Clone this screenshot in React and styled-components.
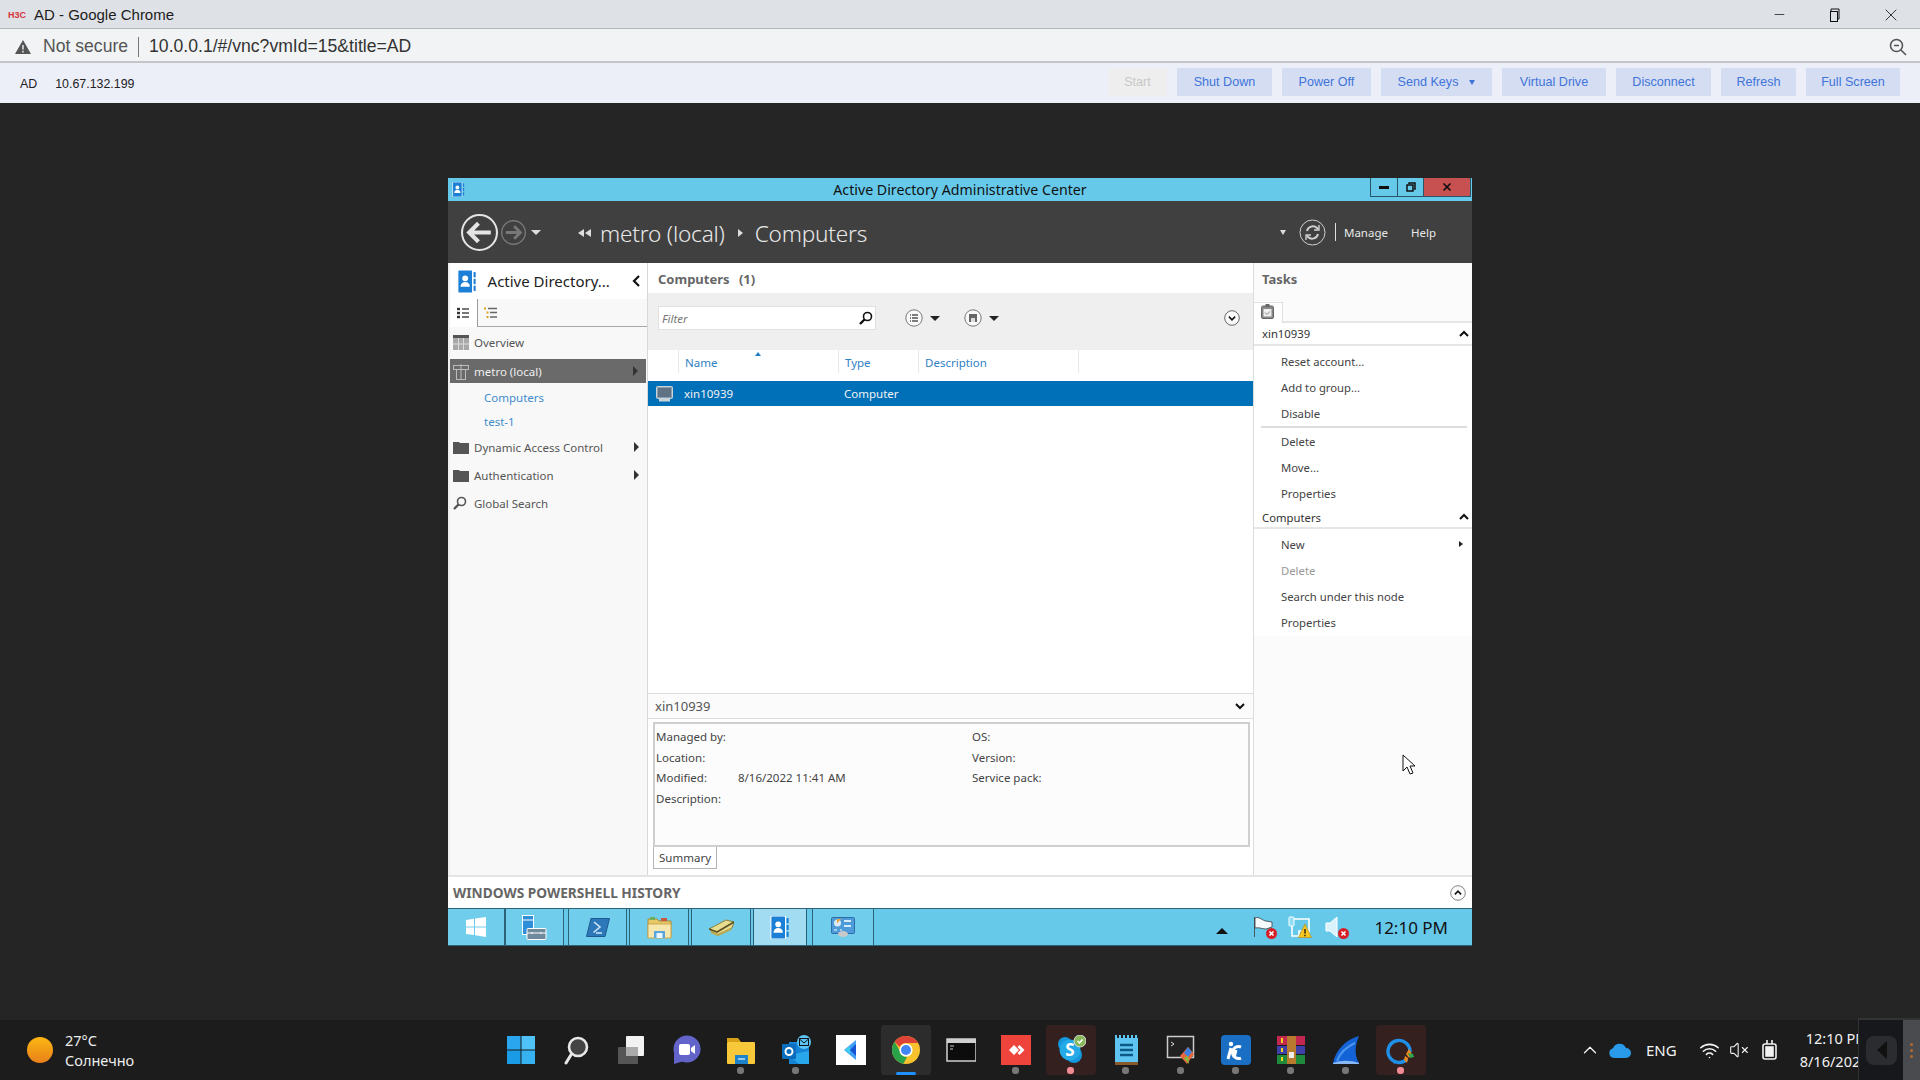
import React from "react";
import styled, { createGlobalStyle } from "styled-components";
import { Wifi, VolumeX, ChevronUp, Minus, X } from "lucide-react";

const GlobalStyle = createGlobalStyle`
  html, body { margin: 0; padding: 0; background: #252525; }
  * { box-sizing: border-box; }
  #root { width: 1920px; height: 1080px; overflow: hidden; }
`;

const SEGOE = `"Noto Sans", "Open Sans", sans-serif`;

const Page = styled.div`
  position: relative;
  width: 1920px;
  height: 1080px;
  display: flex;
  flex-direction: column;
  font-family: "Liberation Sans", sans-serif;
  overflow: hidden;
`;

/* browser chrome */
const ChromeTitle = styled.div`
  height: 29px;
  background: #dee1e6;
  border-bottom: 1px solid #b4b6ba;
  display: flex;
  align-items: center;
  padding: 1px 0 0 8px;
  color: #1c1c1c;
  font-size: 15px;
`;
const Favicon = styled.span`
  width: 21px;
  margin-right: 5px;
  color: #d8343c;
  font-size: 9px;
  font-weight: 700;
`;
const WinControls = styled.div`
  margin-left: auto;
  display: flex;
  align-items: center;
  padding-right: 1px;
  color: #111;
`;
const WinControl = styled.span`
  width: 56px;
  display: flex;
  justify-content: center;
`;
const AddressBar = styled.div`
  height: 34px;
  background: #f1f3f4;
  border-bottom: 2px solid #c4c5c7;
  display: flex;
  align-items: center;
  padding: 3px 13px 0 15px;
  font-size: 17.6px;
  color: #555;
`;
const Divider = styled.span`
  width: 1px;
  height: 20px;
  background: #777;
  margin: 0 10px 0 10px;
`;
const Url = styled.span`
  color: #333;
`;
const VncBar = styled.div`
  height: 40px;
  background: #eceef8;
  display: flex;
  align-items: center;
  padding: 0 20px;
  font-size: 12.4px;
  color: #222;
`;
const VncInfo = styled.div`
  padding-top: 2px;
`;
const VncName = styled.span`
  margin-right: 18px;
`;
const VncButtons = styled.div`
  margin-left: auto;
  padding-bottom: 2px;
  display: flex;
  gap: 10px;
`;
const VncButton = styled.div`
  width: ${(p) => p.$w}px;
  height: 28px;
  background: ${(p) => (p.$off ? "#eeeeee" : "#d5ddf3")};
  color: ${(p) => (p.$off ? "#c8c8c8" : "#3f74d8")};
  display: flex;
  align-items: center;
  justify-content: center;
  gap: 11px;
  font-size: 12.6px;
`;
const DownCaret = styled.i`
  width: 0;
  height: 0;
  border-left: 3.5px solid transparent;
  border-right: 3.5px solid transparent;
  border-top: 5px solid ${(p) => p.$color || "#3f74d8"};
`;

/* remote desktop */
const Stage = styled.div`
  flex: 1;
  background: #252525;
  display: flex;
  justify-content: center;
  padding-top: 75px;
`;
const Win = styled.div`
  width: 1024px;
  height: 768px;
  display: flex;
  flex-direction: column;
  font-family: ${SEGOE};
  font-size: 11.5px;
  background: #fff;
  color: #444;
`;
const TitleBar = styled.div`
  height: 23px;
  flex: none;
  background: #66c9ea;
  display: grid;
  grid-template-columns: 1fr auto 1fr;
  align-items: center;
  font-size: 14.2px;
  color: #111;
`;
const TitleIcon = styled.div`
  padding-left: 4px;
  display: flex;
`;
const TitleButtons = styled.div`
  justify-self: end;
  align-self: start;
  display: flex;
  margin-right: 1px;
  height: 19px;
  border: 1px solid #25566a;
  border-top: 0;
`;
const TitleButton = styled.span`
  width: ${(p) => p.$w}px;
  background: ${(p) => (p.$close ? "#c75050" : "transparent")};
  border-right: ${(p) => (p.$close ? "0" : "1px solid #25566a")};
  display: flex;
  align-items: center;
  justify-content: center;
`;
const DarkBar = styled.div`
  height: 62px;
  flex: none;
  background: #404040;
  color: #e8e8e8;
  display: flex;
  align-items: center;
  padding-left: 13px;
`;
const BarIcon = styled.span`
  margin-left: ${(p) => p.$gap}px;
  display: flex;
`;
const Crumbs = styled.div`
  display: flex;
  align-items: center;
  font-size: 22.6px;
  font-weight: 300;
  padding-top: 2px;
  margin-left: 37px;
  letter-spacing: -0.2px;
`;
const DarkRight = styled.div`
  margin-left: auto;
  display: flex;
  align-items: center;
  font-size: 11.5px;
  padding-right: 36px;
`;
const DarkSep = styled.span`
  width: 1px;
  height: 18px;
  background: #ddd;
  margin: 0 8px 0 9px;
`;
const Main = styled.div`
  flex: 1;
  min-height: 0;
  display: flex;
`;

/* left nav */
const Nav = styled.div`
  width: 200px;
  flex: none;
  background: #f8f8f8;
  border-left: 2px solid #f0f0f0;
  border-right: 1px solid #d8d8d8;
  display: flex;
  flex-direction: column;
`;
const NavHead = styled.div`
  height: 36px;
  display: flex;
  align-items: center;
  padding-left: 7px;
  font-size: 15px;
  color: #222;
  background: #fff;
`;
const NavHeadText = styled.span`
  margin-left: 11px;
  flex: 1;
`;
const NavTabs = styled.div`
  height: 28px;
  display: flex;
`;
const NavTab = styled.div`
  flex: ${(p) => (p.$on ? "0 0 28px" : 1)};
  background: ${(p) => (p.$on ? "#fff" : "transparent")};
  border-right: ${(p) => (p.$on ? "1px solid #9a9a9a" : "0")};
  border-bottom: ${(p) => (p.$on ? "0" : "1px solid #a8a8a8")};
  display: flex;
  align-items: center;
  padding-left: ${(p) => (p.$on ? 7 : 6)}px;
`;
const NavList = styled.div`
  padding-top: 1px;
  display: flex;
  flex-direction: column;
`;
const NavRow = styled.div`
  height: ${(p) => (p.$sel ? 24 : 28)}px;
  margin: ${(p) => (p.$sel ? "3px 1px 2px 0" : "0")};
  background: ${(p) => (p.$sel ? "#6a6a6a" : "transparent")};
  color: ${(p) => (p.$sel ? "#eee" : "#555")};
  display: flex;
  align-items: center;
  padding: 0 8px 0 3px;
`;
const NavIconBox = styled.span`
  width: 21px;
  flex: none;
  display: flex;
`;
const NavLabel = styled.span`
  flex: 1;
`;
const NavSub = styled.div`
  height: 24px;
  padding: 0 0 0 34px;
  display: flex;
  align-items: center;
  color: #3f8ccb;
`;
const RightCaret = styled.i`
  width: 0;
  height: 0;
  border-top: 5px solid transparent;
  border-bottom: 5px solid transparent;
  border-left: 5px solid ${(p) => p.$color || "#333"};
`;
const SmallCaret = styled(RightCaret)`
  border-top-width: 3.5px;
  border-bottom-width: 3.5px;
  border-left-width: 4px;
`;

/* centre */
const Center = styled.div`
  flex: 1;
  min-width: 0;
  display: flex;
  flex-direction: column;
  background: #fff;
`;
const PaneTitle = styled.div`
  height: 30px;
  flex: none;
  display: flex;
  align-items: center;
  padding: 1px 0 0 ${(p) => p.$pad}px;
  font-weight: 700;
  font-size: 13px;
  color: #666;
  word-spacing: 6px;
`;
const FilterBar = styled.div`
  height: 57px;
  flex: none;
  background: #efefef;
  display: flex;
  align-items: flex-start;
  padding: 13px 13px 0 10px;
`;
const FilterBox = styled.div`
  width: 218px;
  height: 24px;
  background: #fff;
  border: 1px solid #e0e0e0;
  display: flex;
  align-items: center;
  justify-content: space-between;
  padding: 0 2px 0 3px;
  font-style: italic;
  color: #777;
`;
const ViewButton = styled.div`
  display: flex;
  align-items: center;
  gap: 7px;
  margin-left: ${(p) => p.$gap}px;
  height: 24px;
`;
const FilterEnd = styled.div`
  margin-left: auto;
  height: 24px;
  display: flex;
  align-items: center;
`;
const ColHead = styled.div`
  height: 31px;
  flex: none;
  position: relative;
  display: grid;
  grid-template-columns: 30px 160px 80px 160px 1fr;
  color: #2f81c4;
`;
const ColCell = styled.div`
  display: flex;
  align-items: center;
  padding: 2px 0 0 6px;
  border-left: ${(p) => (p.$first ? "0" : "1px solid #e8e8e8")};
  margin-bottom: 8px;
`;
const SortMark = styled.i`
  position: absolute;
  left: 107px;
  top: 2px;
  width: 0;
  height: 0;
  border-left: 3.5px solid transparent;
  border-right: 3.5px solid transparent;
  border-bottom: 4px solid #1f7fc4;
`;
const SelRow = styled.div`
  height: 25px;
  flex: none;
  background: #0070b8;
  color: #f2f2f2;
  display: grid;
  grid-template-columns: 30px 160px 1fr;
  align-items: center;
`;
const SelIcon = styled.div`
  padding-left: 8px;
  display: flex;
`;
const SelCell = styled.div`
  padding-left: 6px;
`;
const ListFill = styled.div`
  flex: 1;
`;
const PreviewHead = styled.div`
  height: 26px;
  flex: none;
  background: #fbfbfb;
  border-top: 1px solid #dcdcdc;
  border-bottom: 1px solid #dcdcdc;
  display: flex;
  align-items: center;
  justify-content: space-between;
  padding: 0 8px 0 7px;
  font-size: 13px;
  color: #555;
`;
const PreviewBox = styled.div`
  height: 125px;
  flex: none;
  margin: 3px 3px 0 5px;
  background: #fcfcfc;
  border: 2px solid #cfcfcf;
  padding: 2px 2px 0 1px;
  display: grid;
  grid-template-columns: 316px 1fr;
  grid-auto-rows: 20.8px;
  align-items: center;
  color: #444;
`;
const Field = styled.div`
  display: flex;
`;
const FieldLabel = styled.span`
  width: 82px;
  flex: none;
`;
const PreviewTabs = styled.div`
  height: 28px;
  flex: none;
  padding-left: 5px;
`;
const SummaryTab = styled.div`
  width: 64px;
  height: 22px;
  background: #fff;
  border: 1px solid #b4b4b4;
  border-top: 0;
  display: flex;
  align-items: center;
  justify-content: center;
  color: #444;
`;

/* tasks */
const Tasks = styled.div`
  width: 219px;
  flex: none;
  background: #fbfbfb;
  border-left: 1px solid #dcdcdc;
  display: flex;
  flex-direction: column;
  color: #444;
  font-size: 11.3px;
`;
const TaskTabs = styled.div`
  height: 30px;
  flex: none;
  padding-top: 9px;
  border-bottom: 2px solid #e6e6e6;
  display: flex;
`;
const TaskTab = styled.div`
  width: 29px;
  height: 21px;
  background: #fff;
  border: 1px solid #e0e0e0;
  border-left: 0;
  border-bottom: 0;
  padding-left: 7px;
`;
const SectionHead = styled.div`
  height: ${(p) => p.$h || 23}px;
  flex: none;
  background: #fff;
  border-bottom: 2px solid #e6e6e6;
  display: flex;
  align-items: center;
  justify-content: space-between;
  padding: 0 3px 0 8px;
  color: #333;
`;
const TaskList = styled.div`
  background: #fff;
  padding-top: 2px;
  padding-bottom: 1px;
  display: flex;
  flex-direction: column;
`;
const TaskItem = styled.div`
  height: 26px;
  flex: none;
  display: flex;
  align-items: center;
  justify-content: space-between;
  padding: 0 9px 0 27px;
  color: ${(p) => (p.$off ? "#999" : "#444")};
`;
const TaskSep = styled.div`
  height: 2px;
  margin: 0 5px 0 7px;
  background: #ddd;
`;

/* powershell strip + server taskbar */
const PsStrip = styled.div`
  height: 33px;
  flex: none;
  background: #fff;
  border-top: 2px solid #e4e4e4;
  display: flex;
  align-items: center;
  justify-content: space-between;
  padding: 0 6px 0 5px;
  font-weight: 700;
  font-size: 13.7px;
  color: #666;
`;
const ServerBar = styled.div`
  height: 38px;
  flex: none;
  background: #66c9ea;
  border-top: 1px solid #2e6277;
  border-bottom: 1px solid #2e6277;
  display: flex;
  align-items: stretch;
`;
const ServerBtn = styled.div`
  width: ${(p) => p.$w || 59}px;
  margin-right: ${(p) => p.$mr ?? 2}px;
  background: ${(p) => (p.$on ? "#a2dcf2" : "#70cdeb")};
  border-right: 1px solid #2e6277;
  border-left: ${(p) => (p.$first ? "0" : "1px solid #2e6277")};
  display: flex;
  align-items: center;
  justify-content: center;
`;
const ServerTray = styled.div`
  margin-left: auto;
  display: flex;
  align-items: center;
  padding-right: 24px;
`;
const TrayCaret = styled.i`
  width: 0;
  height: 0;
  border-left: 6px solid transparent;
  border-right: 6px solid transparent;
  border-bottom: 6px solid #111;
  margin: 8px 25px 0 0;
`;
const TrayIcon = styled.span`
  position: relative;
  display: flex;
  margin-right: ${(p) => p.$mr}px;
`;
const ServerClock = styled.span`
  font-size: 17px;
  color: #111;
`;

/* local taskbar */
const Taskbar = styled.div`
  height: 60px;
  flex: none;
  background: #1c1c1c;
  display: flex;
  align-items: center;
  color: #eee;
  font-family: ${SEGOE};
`;
const Weather = styled.div`
  width: 493px;
  flex: none;
  display: flex;
  align-items: center;
  padding-left: 27px;
  gap: 12px;
  font-size: 14.5px;
  line-height: 20px;
`;
const Sun = styled.span`
  width: 26px;
  height: 26px;
  border-radius: 50%;
  background: linear-gradient(180deg, #fdb813 0%, #e8801a 100%);
`;
const AppSlots = styled.div`
  display: flex;
`;
const AppSlot = styled.div`
  position: relative;
  width: 55px;
  height: 50px;
  padding: 0 2.5px;
  display: flex;
  align-items: center;
  justify-content: center;
  border-radius: 5px;
  background: ${(p) => p.$bg || "transparent"};
  background-clip: content-box;
`;
const AppDot = styled.i`
  position: absolute;
  left: 50%;
  bottom: ${(p) => (p.$wide ? 0 : 1)}px;
  width: ${(p) => (p.$wide ? 20 : 7)}px;
  height: ${(p) => (p.$wide ? 3 : 7)}px;
  margin-left: ${(p) => (p.$wide ? -10 : -3.5)}px;
  border-radius: 3px;
  background: ${(p) => p.$color};
`;
const Tray = styled.div`
  display: flex;
  align-items: center;
  margin-left: 151px;
  color: #f2f2f2;
`;
const TrayItem = styled.span`
  display: flex;
  margin-right: ${(p) => p.$mr}px;
  font-size: ${(p) => p.$fs || 14}px;
`;
const Clock = styled.div`
  display: flex;
  flex-direction: column;
  align-items: flex-end;
  white-space: nowrap;
  font-size: 14.5px;
  line-height: 23px;
`;
const Overlay = styled.div`
  position: absolute;
  right: 0;
  bottom: 0;
  width: 62px;
  height: 62px;
  background: #17181c;
  border-top: 2px solid #333;
  border-left: 1px solid #333;
  display: flex;
  align-items: center;
`;
const OverlayLogo = styled.div`
  width: 31px;
  height: 29px;
  margin-left: 7px;
  border-radius: 8px;
  background: #2b2c30;
  display: flex;
  align-items: center;
  justify-content: center;
`;
const OverlayStrip = styled.div`
  margin-left: auto;
  width: 17px;
  height: 100%;
  background: #4a4b4f;
  display: flex;
  flex-direction: column;
  align-items: center;
  justify-content: center;
  gap: 3px;
`;
const OverlayDot = styled.i`
  width: 3px;
  height: 3px;
  border-radius: 50%;
  background: #b36a2c;
`;
const Pointer = styled.svg`
  position: absolute;
  left: 1402px;
  top: 754px;
`;

/* drawings */
const AdIcon = ({ size = 12 }) => (
  <svg width={size * 0.85} height={size} viewBox="0 0 17 22">
    <rect x="0" y="0" width="14" height="22" rx="1" fill="#1c7fd6" stroke="#fff" />
    <rect x="15" y="2" width="2" height="5" fill="#1c7fd6" />
    <rect x="15" y="8.5" width="2" height="5" fill="#1c7fd6" />
    <rect x="15" y="15" width="2" height="5" fill="#1c7fd6" />
    <circle cx="7" cy="8" r="2.8" fill="#fff" />
    <path d="M2.5 16c0-3 2-4.5 4.5-4.5s4.5 1.5 4.5 4.5z" fill="#fff" />
  </svg>
);
const RoundArrow = ({ size, color, dir = 1, width = 2 }) => (
  <svg width={size} height={size} viewBox="0 0 36 36" style={{ transform: dir < 0 ? "scaleX(-1)" : "none" }}>
    <circle cx="18" cy="18" r="17" fill="none" stroke={color} strokeWidth={width} />
    <path d="M7 18h20M19 9l9 9-9 9" fill="none" stroke={color} strokeWidth="4" />
  </svg>
);
const Caret = ({ color = "#222", w = 9 }) => <DownCaret $color={color} style={{ borderLeftWidth: w / 2, borderRightWidth: w / 2 }} />;
const Circled = ({ children, size = 18, color = "#777" }) => (
  <svg width={size} height={size} viewBox="0 0 18 18">
    <circle cx="9" cy="9" r="8.2" fill="#fafafa" stroke={color} />
    {children}
  </svg>
);
const Chevron = ({ up, color = "#111", size = 10 }) => (
  <svg width={size} height={size} viewBox="0 0 10 10">
    <path d={up ? "M1 7l4-4 4 4" : "M1 3l4 4 4-4"} fill="none" stroke={color} strokeWidth="2" />
  </svg>
);
const Folder = () => (
  <svg width="16" height="13" viewBox="0 0 16 13">
    <path d="M0 1h6l1 1h9v11H0z" fill="#555" />
  </svg>
);
const GridIcon = () => (
  <svg width="16" height="15" viewBox="0 0 16 15">
    <rect width="16" height="15" fill="#a9a9a9" />
    <rect width="16" height="3" fill="#555" />
    <path d="M5.5 3v12M10.5 3v12M0 9h16" stroke="#ddd" />
  </svg>
);
const DomainIcon = () => (
  <svg width="16" height="17" viewBox="0 0 16 17" fill="none" stroke="#bbb">
    <rect x="0.5" y="2.5" width="15" height="4" />
    <rect x="3.5" y="6.5" width="9" height="10" />
    <path d="M8 1v15" />
  </svg>
);
const MagSmall = ({ color = "#555", size = 14 }) => (
  <svg width={size} height={size} viewBox="0 0 14 14" fill="none" stroke={color}>
    <circle cx="8.5" cy="5.5" r="4" strokeWidth="1.6" />
    <path d="M5.5 8.5L1 13" strokeWidth="2.4" />
  </svg>
);
const ListLines = () => (
  <svg width="12" height="12" viewBox="0 0 12 12" stroke="#555" strokeWidth="1.6">
    {[2, 6, 10].map((y) => (
      <g key={y}>
        <path d={`M0 ${y}h3`} stroke="#333" strokeWidth="2.4" />
        <path d={`M5 ${y}h7`} />
      </g>
    ))}
  </svg>
);
const TreeLines = () => (
  <svg width="13" height="12" viewBox="0 0 13 12" strokeWidth="1.5">
    <path d="M0 1.5h2M2.5 5.5h2M2.5 10h2" stroke="#d9a21b" strokeWidth="2" />
    <path d="M4 1.5h9M6 5.5h7M6 10h7" stroke="#666" />
  </svg>
);
const Clipboard = () => (
  <svg width="13" height="15" viewBox="0 0 13 15" style={{ marginTop: 1 }}>
    <rect x="0.5" y="2" width="12" height="12.5" rx="1.5" fill="#888" stroke="#666" />
    <rect x="2.5" y="5" width="8" height="7.5" fill="#eee" />
    <rect x="4.5" y="0" width="4" height="3" fill="#666" />
    <path d="M4 8.5l2 2 3-3" stroke="#888" fill="none" />
  </svg>
);
const Monitor = () => (
  <svg width="17" height="16" viewBox="0 0 17 16">
    <rect x="0.5" y="0.5" width="16" height="12" rx="1" fill="#8aa0b2" stroke="#c9d3da" />
    <rect x="2" y="2" width="13" height="9" fill="#5f7384" />
    <rect x="3" y="13" width="11" height="2.5" fill="#c9d3da" />
  </svg>
);

const ServerGlyphs = {
  win: (
    <svg width="20" height="20" viewBox="0 0 20 20" fill="#fff">
      <path d="M0 3l8-1.2V9.5H0zM9 1.6L20 0v9.5H9zM0 10.5h8V18L0 17zM9 10.5h11V20L9 18.3z" />
    </svg>
  ),
  server: (
    <svg width="25" height="25" viewBox="0 0 25 25">
      <rect x="0.5" y="0.5" width="11" height="19" fill="#2e8fd8" stroke="#fff" />
      <path d="M1 5h10" stroke="#fff" />
      <rect x="5" y="13.5" width="19" height="11" rx="1" fill="#6f8a9c" stroke="#fff" />
      <path d="M5 18h19M10 17v2M19 17v2" stroke="#fff" />
    </svg>
  ),
  ps: (
    <svg width="24" height="19" viewBox="0 0 24 19">
      <path d="M5 0.5h18.5L19 18.5H0.5z" fill="#2c78b8" stroke="#1c5a90" />
      <path d="M8 4l6 5-6.5 5.5M10 15h6" fill="none" stroke="#cfe6f7" strokeWidth="1.6" />
    </svg>
  ),
  files: (
    <svg width="25" height="23" viewBox="0 0 25 23">
      <path d="M1 3h9l2 2h12v16H1z" fill="#e8c766" stroke="#a88b3a" />
      <path d="M1 8h23v14H1z" fill="#f6e7ae" stroke="#c9a951" />
      <rect x="3" y="1" width="5" height="3" fill="#6fae5a" />
      <rect x="14" y="2" width="6" height="3" fill="#c8593f" />
      <path d="M7 22v-7h11v7" fill="#5aa5dd" />
      <rect x="9.5" y="17" width="6" height="5" fill="#eaf6fd" />
    </svg>
  ),
  book: (
    <svg width="25" height="17" viewBox="0 0 25 17">
      <path d="M0 10L17 1l8 2-2 6L8 16z" fill="#e7dc8f" stroke="#8a7f3c" />
      <path d="M0 10l8 3L25 3" fill="none" stroke="#5d5220" strokeWidth="1.6" />
      <path d="M2 13l7 3 13-6" fill="none" stroke="#bba94d" strokeWidth="2" />
    </svg>
  ),
  panel: (
    <svg width="24" height="20" viewBox="0 0 24 20">
      <rect x="0.5" y="0.5" width="23" height="16" rx="1" fill="#4f9ad8" stroke="#2a6fa8" />
      <circle cx="6.5" cy="6" r="3.5" fill="#d9ecf8" />
      <path d="M6.5 6V2.500h3" fill="#f0a53a" stroke="#f0a53a" />
      <path d="M13 4h7M13 9h7" stroke="#d5ecfb" strokeWidth="2" />
      <path d="M3 13h3M9 13h2" stroke="#9ed0f2" strokeWidth="2" />
      <ellipse cx="12" cy="17" rx="5" ry="3" fill="#c9c9c9" />
    </svg>
  ),
};

const Cross = () => (
  <svg width="11" height="11" viewBox="0 0 11 11" style={{ position: "absolute", right: -2, bottom: -1 }}>
    <circle cx="5.5" cy="5.5" r="5.5" fill="#d81f26" />
    <path d="M3.5 3.5l4 4M7.5 3.5l-4 4" stroke="#fff" strokeWidth="1.6" />
  </svg>
);
const Flag = () => (
  <TrayIcon $mr={13}>
    <svg width="22" height="22" viewBox="0 0 22 22">
      <path d="M1.5 1v20M2 2c4-2 8 3 11 3l6 1v5l-6 2c-4 0-7-2-11-1z" fill="#f5fbfd" stroke="#3a3a3a" strokeWidth=".8" />
    </svg>
    <Cross />
  </TrayIcon>
);
const NetTray = () => (
  <TrayIcon $mr={13}>
    <svg width="24" height="22" viewBox="0 0 24 22">
      <rect x="1" y="1" width="5" height="9" rx="1" fill="#8fdcf5" stroke="#fff" />
      <path d="M6 3h15v14M4 10v10h7v-5h4" fill="none" stroke="#fff" strokeWidth="1.6" />
      <path d="M17 8l6.5 13.5H10.5z" fill="#f7c51e" stroke="#b68a0c" strokeWidth=".6" />
      <path d="M17 13v4.5M17 18.8v1.4" stroke="#111" strokeWidth="1.3" />
    </svg>
  </TrayIcon>
);
const SoundTray = () => (
  <TrayIcon $mr={27}>
    <svg width="22" height="22" viewBox="0 0 22 22">
      <path d="M1 7h4l7-6v20l-7-6H1z" fill="#d9f2fb" stroke="#fff" />
    </svg>
    <Cross />
  </TrayIcon>
);

const App24 = ({ children, w = 30, h = 30 }) => (
  <svg width={w} height={h} viewBox="0 0 30 30">
    {children}
  </svg>
);

const apps = [
  {
    key: "start",
    icon: (
      <App24>
        <path d="M1 1h13.5v13.5H1z" fill="#29a6ee" />
        <path d="M15.5 1H29v13.5H15.5z" fill="#4fc3f7" />
        <path d="M1 15.5h13.5V29H1z" fill="#1a9be6" />
        <path d="M15.5 15.5H29V29H15.5z" fill="#36b2f0" />
      </App24>
    ),
  },
  {
    key: "search",
    icon: (
      <App24>
        <circle cx="17" cy="12" r="9" fill="#444" stroke="#e8e8e8" strokeWidth="2.6" />
        <path d="M10.5 19L5 28" stroke="#e8e8e8" strokeWidth="3" strokeLinecap="round" />
      </App24>
    ),
  },
  {
    key: "task",
    icon: (
      <App24>
        <rect x="2" y="12" width="20" height="17" rx="1" fill="#555" />
        <rect x="10" y="1" width="18" height="20" rx="1" fill="#f2f2f2" />
        <rect x="10" y="12" width="12" height="9" fill="#aaa" />
      </App24>
    ),
  },
  {
    key: "chat",
    icon: (
      <App24>
        <circle cx="16" cy="14" r="13.5" fill="#6264c9" />
        <path d="M3 18v11l10-3z" fill="#6264c9" />
        <rect x="8" y="9" width="11" height="11" rx="2" fill="#fff" />
        <path d="M20 13l4-3v9l-4-3z" fill="#fff" />
      </App24>
    ),
  },
  {
    key: "explorer",
    dot: "#777",
    icon: (
      <App24>
        <path d="M1 3h11l3 4H1z" fill="#d9a117" />
        <rect x="1" y="7" width="28" height="22" rx="1" fill="#f6c83a" />
        <rect x="9" y="20" width="13" height="9" fill="#1d82c9" />
        <path d="M12 24h7" stroke="#bfe3f8" strokeWidth="1.5" />
      </App24>
    ),
  },
  {
    key: "outlook",
    dot: "#777",
    icon: (
      <App24>
        <rect x="8" y="7" width="20" height="22" fill="#1584d6" />
        <path d="M8 20l10 9h10V16z" fill="#28a8ea" />
        <rect x="1" y="9" width="14" height="15" rx="1" fill="#0a6cbd" />
        <circle cx="8" cy="16.5" r="3.5" fill="none" stroke="#fff" strokeWidth="2" />
        <ellipse cx="23" cy="7" rx="7" ry="7" fill="#5cc5f5" />
        <rect x="18.5" y="3.5" width="9" height="7" fill="none" stroke="#111" />
        <path d="M18.5 4l4.5 4 4.5-4" fill="none" stroke="#111" />
      </App24>
    ),
  },
  {
    key: "kite",
    icon: (
      <App24>
        <rect width="30" height="30" fill="#fff" />
        <path d="M20 5L8 15l12 10z" fill="#3f9ff5" />
        <path d="M14 15l6-6v12z" fill="#1554d4" />
        <path d="M9 15l5-4v8z" fill="#3fd0f0" />
      </App24>
    ),
  },
  {
    key: "chrome",
    dot: "#1e90ff",
    wide: true,
    bg: "#2c2c2c",
    icon: (
      <App24>
        <circle cx="15" cy="15" r="14" fill="#f7c22d" />
        <path d="M15 1a14 14 0 0 1 12.1 7H15a7 7 0 0 0-6.3 4L3.6 6.8A14 14 0 0 1 15 1z" fill="#dd4437" />
        <path d="M3.6 6.8l6 10.4a7 7 0 0 0 6.4 4.8l-3.6 6.8A14 14 0 0 1 3.6 6.8z" fill="#2aa24a" />
        <circle cx="15" cy="15" r="6.6" fill="#fff" />
        <circle cx="15" cy="15" r="5" fill="#4285f4" />
      </App24>
    ),
  },
  {
    key: "cmd",
    icon: (
      <App24>
        <rect x="1" y="4" width="29" height="22" fill="#0c0c0c" stroke="#cfcfcf" strokeWidth="1.5" />
        <path d="M1 4h29v4H1z" fill="#cfcfcf" />
        <path d="M4 11h4M4 14h3" stroke="#ccc" />
      </App24>
    ),
  },
  {
    key: "anydesk",
    dot: "#777",
    icon: (
      <App24>
        <rect width="30" height="30" fill="#ef443b" />
        <path d="M13 10l5 5-5 5-5-5zM18.500 10l5 5-5 5-2-2 3-3-3-3z" fill="#fff" />
      </App24>
    ),
  },
  {
    key: "skype",
    dot: "#f08b96",
    bg: "#33201f",
    icon: (
      <App24>
        <circle cx="9" cy="9" r="7" fill="#1497dc" />
        <circle cx="18" cy="20" r="8" fill="#1497dc" />
        <circle cx="14" cy="15" r="10.5" fill="#25aae8" />
        <text x="14" y="21" textAnchor="middle" fontSize="17" fontWeight="700" fill="#fff" fontFamily="Noto Sans">
          S
        </text>
        <circle cx="24" cy="6" r="6" fill="#87b95a" stroke="#ddd" />
        <path d="M21.5 6l2 2 3-3.5" fill="none" stroke="#fff" strokeWidth="1.5" />
      </App24>
    ),
  },
  {
    key: "notes",
    dot: "#777",
    icon: (
      <App24>
        <rect x="4" y="3" width="23" height="25" fill="#5ec4f2" />
        <rect x="4" y="27" width="23" height="3" fill="#8a5a2c" />
        <path d="M5 3V0M9 3V0M13 3V0M17 3V0M21 3V0M25 3V0" stroke="#5ec4f2" strokeWidth="2" />
        <path d="M9 10h13M9 15h13M9 20h13" stroke="#0e5a86" strokeWidth="2.4" />
      </App24>
    ),
  },
  {
    key: "code",
    dot: "#777",
    icon: (
      <App24>
        <rect x="1.5" y="1.5" width="26" height="21" fill="#222" stroke="#ccc" strokeWidth="1.5" />
        <path d="M5 7l3 2-3 2" fill="none" stroke="#ddd" />
        <path d="M14 21l8-9 6 7-7 10z" fill="#e9683a" />
        <path d="M18 18l4-6 4 5-4 5z" fill="#3f7fe0" />
        <path d="M18 23l4-2 1 8z" fill="#7fbf3f" />
      </App24>
    ),
  },
  {
    key: "ic",
    dot: "#777",
    icon: (
      <App24>
        <rect width="30" height="30" rx="4" fill="#1a6fc4" />
        <circle cx="10" cy="9" r="2.2" fill="#fff" />
        <path d="M10 13l-3 11M20 12a6 6 0 1 0 0 11M13 23l2-8" fill="none" stroke="#fff" strokeWidth="3" />
      </App24>
    ),
  },
  {
    key: "rar",
    dot: "#777",
    icon: (
      <App24>
        <rect x="1" y="1" width="28" height="9" fill="#c2274f" />
        <rect x="1" y="11" width="28" height="8" fill="#3e3fa8" />
        <rect x="1" y="20" width="28" height="9" fill="#1f8a3c" />
        <rect x="11" y="1" width="9" height="28" fill="#b87a2e" />
        <rect x="13" y="17" width="5" height="6" fill="#eee" />
        <path d="M6 3v5M6 13v4M6 22v4" stroke="#f1d21f" strokeWidth="2" />
      </App24>
    ),
  },
  {
    key: "shark",
    dot: "#777",
    icon: (
      <App24>
        <path d="M28 1C14 5 5 15 2 28h26C23 20 24 10 28 1z" fill="#1463d6" />
        <path d="M2 28c8-3 17-3 26 0v1H2z" fill="#8ab8f2" />
        <path d="M24 8C15 12 9 18 6 26" stroke="#4b97ef" strokeWidth="2" fill="none" />
      </App24>
    ),
  },
  {
    key: "qq",
    dot: "#f08b96",
    bg: "#33201f",
    icon: (
      <App24>
        <path d="M21 24a11 11 0 1 1 3-7" fill="none" stroke="#1f8fe8" strokeWidth="3.4" />
        <path d="M7 25l1 4 4-2" fill="#1f8fe8" />
        <path d="M23 14l3 5-3 4-3-4z" fill="#f08a1f" />
        <path d="M22 18l5 1 1 3-4 1z" fill="#2ea44f" />
        <path d="M19 21l3 2-1 5-3-3z" fill="#f08a1f" />
      </App24>
    ),
  },
];

const details = [
  ["Managed by:", "", "OS:"],
  ["Location:", "", "Version:"],
  ["Modified:", "8/16/2022 11:41 AM", "Service pack:"],
  ["Description:", "", ""],
];
const computerTasks = ["Reset account...", "Add to group...", "Disable", null, "Delete", "Move...", "Properties"];
const vncButtons = [
  ["Shut Down", 95],
  ["Power Off", 89],
  ["Send Keys", 111, true],
  ["Virtual Drive", 104],
  ["Disconnect", 95],
  ["Refresh", 75],
  ["Full Screen", 94],
];

export default function App() {
  return (
    <Page>
      <GlobalStyle />
      <ChromeTitle>
        <Favicon>H3C</Favicon>
        AD - Google Chrome
        <WinControls>
          <WinControl>
            <Minus size={15} strokeWidth={1.2} />
          </WinControl>
          <WinControl>
            <svg width="14" height="14" viewBox="0 0 14 14" fill="none" stroke="#111">
              <path d="M3 3V1h8v10H9" />
              <rect x="2.5" y="3.5" width="7" height="10" />
            </svg>
          </WinControl>
          <WinControl>
            <X size={20} strokeWidth={1} />
          </WinControl>
        </WinControls>
      </ChromeTitle>
      <AddressBar>
        <svg width="16" height="14" viewBox="0 0 16 14" style={{ marginRight: 12 }}>
          <path d="M8 0l8 14H0z" fill="#555" />
          <path d="M8 5v4.5M8 10.8v1.6" stroke="#f1f3f4" strokeWidth="1.4" />
        </svg>
        Not secure
        <Divider />
        <Url>10.0.0.1/#/vnc?vmId=15&title=AD</Url>
        <svg width="18" height="18" viewBox="0 0 18 18" fill="none" stroke="#555" strokeWidth="1.6" style={{ marginLeft: "auto" }}>
          <circle cx="7.5" cy="7.5" r="6" />
          <path d="M12 12l5 5M5 7.5h5" />
        </svg>
      </AddressBar>
      <VncBar>
        <VncInfo>
          <VncName>AD</VncName>
          10.67.132.199
        </VncInfo>
        <VncButtons>
          <VncButton $off $w={59}>
            Start
          </VncButton>
          {vncButtons.map(([label, w, menu]) => (
            <VncButton key={label} $w={w}>
              {label}
              {menu && <DownCaret />}
            </VncButton>
          ))}
        </VncButtons>
      </VncBar>

      <Stage>
        <Win>
          <TitleBar>
            <TitleIcon>
              <AdIcon size={15} />
            </TitleIcon>
            Active Directory Administrative Center
            <TitleButtons>
              <TitleButton $w={27}>
                <svg width="10" height="3">
                  <rect width="10" height="3" fill="#111" />
                </svg>
              </TitleButton>
              <TitleButton $w={26}>
                <svg width="10" height="10" viewBox="0 0 10 10" fill="none" stroke="#111" strokeWidth="1.5">
                  <path d="M3 2V1h6v6H8" />
                  <rect x="1" y="3" width="6" height="6" />
                </svg>
              </TitleButton>
              <TitleButton $w={46} $close>
                <X size={12} strokeWidth={3.4} color="#111" />
              </TitleButton>
            </TitleButtons>
          </TitleBar>
          <DarkBar>
            <RoundArrow size={37} color="#e4e4e4" dir={-1} />
            <BarIcon $gap={3}>
              <RoundArrow size={25} color="#787878" />
            </BarIcon>
            <BarIcon $gap={5}>
              <Caret color="#ddd" w={10} />
            </BarIcon>
            <Crumbs>
              <svg width="13" height="8" viewBox="0 0 13 8" fill="#ddd" style={{ marginRight: 9 }}>
                <path d="M6 0v8L0 4zM13 0v8L7 4z" />
              </svg>
              metro (local)
              <svg width="5" height="8" viewBox="0 0 5 8" fill="#ddd" style={{ margin: "0 12px 0 13px" }}>
                <path d="M0 0l5 4-5 4z" />
              </svg>
              Computers
            </Crumbs>
            <DarkRight>
              <Caret color="#ddd" w={7} />
              <BarIcon $gap={13}>
                <svg width="27" height="27" viewBox="0 0 27 27" fill="none" stroke="#cfcfcf">
                  <circle cx="13.5" cy="13.5" r="12.5" />
                  <path d="M8 12a6 6 0 0 1 10-3l1 1M19 15a6 6 0 0 1-10 3l-1-1" strokeWidth="2" />
                  <path d="M20 6v5h-5M7 21v-5h5" strokeWidth="1.4" />
                </svg>
              </BarIcon>
              <DarkSep />
              Manage
              <BarIcon $gap={23}>Help</BarIcon>
            </DarkRight>
          </DarkBar>

          <Main>
            <Nav>
              <NavHead>
                <AdIcon size={23} />
                <NavHeadText>Active Directory...</NavHeadText>
                <BarIcon $gap={0} style={{ marginRight: 7 }}>
                  <svg width="8" height="12" viewBox="0 0 8 12" fill="none" stroke="#111" strokeWidth="2.2">
                    <path d="M7 1L2 6l5 5" />
                  </svg>
                </BarIcon>
              </NavHead>
              <NavTabs>
                <NavTab $on>
                  <ListLines />
                </NavTab>
                <NavTab>
                  <TreeLines />
                </NavTab>
              </NavTabs>
              <NavList>
                <NavRow>
                  <NavIconBox>
                    <GridIcon />
                  </NavIconBox>
                  <NavLabel>Overview</NavLabel>
                </NavRow>
                <NavRow $sel>
                  <NavIconBox>
                    <DomainIcon />
                  </NavIconBox>
                  <NavLabel>metro (local)</NavLabel>
                  <RightCaret />
                </NavRow>
                <NavSub>Computers</NavSub>
                <NavSub>test-1</NavSub>
                <NavRow>
                  <NavIconBox>
                    <Folder />
                  </NavIconBox>
                  <NavLabel>Dynamic Access Control</NavLabel>
                  <RightCaret />
                </NavRow>
                <NavRow>
                  <NavIconBox>
                    <Folder />
                  </NavIconBox>
                  <NavLabel>Authentication</NavLabel>
                  <RightCaret />
                </NavRow>
                <NavRow>
                  <NavIconBox>
                    <MagSmall />
                  </NavIconBox>
                  <NavLabel>Global Search</NavLabel>
                </NavRow>
              </NavList>
            </Nav>

            <Center>
              <PaneTitle $pad={10}>Computers (1)</PaneTitle>
              <FilterBar>
                <FilterBox>
                  Filter
                  <MagSmall color="#111" />
                </FilterBox>
                <ViewButton $gap={29}>
                  <Circled>
                    <path d="M5 6h1M7 6h6M5 9h1M7 9h6M5 12h1M7 12h6" stroke="#555" strokeWidth="1.4" />
                  </Circled>
                  <Caret w={10} />
                </ViewButton>
                <ViewButton $gap={24}>
                  <Circled>
                    <rect x="5" y="5" width="8" height="8" fill="#666" />
                    <rect x="7" y="9" width="4" height="4" fill="#ddd" />
                  </Circled>
                  <Caret w={10} />
                </ViewButton>
                <FilterEnd>
                  <Circled size={16} color="#555">
                    <path d="M5.5 7.5L9 11l3.5-3.5" fill="none" stroke="#111" strokeWidth="1.8" />
                  </Circled>
                </FilterEnd>
              </FilterBar>
              <ColHead>
                <ColCell $first />
                <ColCell>Name</ColCell>
                <ColCell>Type</ColCell>
                <ColCell>Description</ColCell>
                <ColCell />
                <SortMark />
              </ColHead>
              <SelRow>
                <SelIcon>
                  <Monitor />
                </SelIcon>
                <SelCell>xin10939</SelCell>
                <SelCell>Computer</SelCell>
              </SelRow>
              <ListFill />
              <PreviewHead>
                xin10939
                <Chevron />
              </PreviewHead>
              <PreviewBox>
                {details.map(([label, value, right]) => (
                  <React.Fragment key={label}>
                    <Field>
                      <FieldLabel>{label}</FieldLabel>
                      {value}
                    </Field>
                    <Field>{right}</Field>
                  </React.Fragment>
                ))}
              </PreviewBox>
              <PreviewTabs>
                <SummaryTab>Summary</SummaryTab>
              </PreviewTabs>
            </Center>

            <Tasks>
              <PaneTitle $pad={8}>Tasks</PaneTitle>
              <TaskTabs>
                <TaskTab>
                  <Clipboard />
                </TaskTab>
              </TaskTabs>
              <SectionHead>
                xin10939
                <Chevron up />
              </SectionHead>
              <TaskList>
                {computerTasks.map((t, i) => (t ? <TaskItem key={i}>{t}</TaskItem> : <TaskSep key={i} />))}
              </TaskList>
              <SectionHead $h={22}>
                Computers
                <Chevron up />
              </SectionHead>
              <TaskList>
                <TaskItem>
                  New
                  <SmallCaret $color="#222" />
                </TaskItem>
                <TaskItem $off>Delete</TaskItem>
                <TaskItem>Search under this node</TaskItem>
                <TaskItem>Properties</TaskItem>
              </TaskList>
            </Tasks>
          </Main>

          <PsStrip>
            WINDOWS POWERSHELL HISTORY
            <Circled size={16} color="#777">
              <path d="M5.5 10.5L9 7l3.5 3.5" fill="none" stroke="#111" strokeWidth="1.8" />
            </Circled>
          </PsStrip>
          <ServerBar>
            <ServerBtn $first $w={57} $mr={0}>
              {ServerGlyphs.win}
            </ServerBtn>
            <ServerBtn $mr={4}>{ServerGlyphs.server}</ServerBtn>
            <ServerBtn>{ServerGlyphs.ps}</ServerBtn>
            <ServerBtn $w={60}>{ServerGlyphs.files}</ServerBtn>
            <ServerBtn $w={60}>{ServerGlyphs.book}</ServerBtn>
            <ServerBtn $on $w={54} $mr={5}>
              <AdIcon size={23} />
            </ServerBtn>
            <ServerBtn $w={62}>{ServerGlyphs.panel}</ServerBtn>
            <ServerTray>
              <TrayCaret />
              <Flag />
              <NetTray />
              <SoundTray />
              <ServerClock>12:10 PM</ServerClock>
            </ServerTray>
          </ServerBar>
        </Win>
      </Stage>

      <Taskbar>
        <Weather>
          <Sun />
          <div>
            27°C
            <br />
            Солнечно
          </div>
        </Weather>
        <AppSlots>
          {apps.map((a) => (
            <AppSlot key={a.key} $bg={a.bg}>
              {a.icon}
              {a.dot && <AppDot $color={a.dot} $wide={a.wide} />}
            </AppSlot>
          ))}
        </AppSlots>
        <Tray>
          <TrayItem $mr={8}>
            <ChevronUp size={22} strokeWidth={1.4} />
          </TrayItem>
          <TrayItem $mr={15}>
            <svg width="22" height="15" viewBox="0 0 22 15">
              <path d="M5 15a5 5 0 0 1-1-9.8A7 7 0 0 1 17 5a5 5 0 0 1 0 10z" fill="#2a9bea" />
            </svg>
          </TrayItem>
          <TrayItem $mr={22} $fs={15}>
            ENG
          </TrayItem>
          <TrayItem $mr={9}>
            <Wifi size={21} strokeWidth={1.8} />
          </TrayItem>
          <TrayItem $mr={10}>
            <VolumeX size={20} strokeWidth={1.3} />
          </TrayItem>
          <TrayItem $mr={21}>
            <svg width="20" height="22" viewBox="0 0 20 22" fill="none" stroke="#f2f2f2" strokeWidth="1.6">
              <rect x="4" y="5" width="13" height="15" rx="2" />
              <rect x="7" y="8" width="7" height="9" fill="#f2f2f2" />
              <path d="M8 1v4M13 1v4" />
            </svg>
          </TrayItem>
          <Clock>
            <span>12:10 PM</span>
            <span>8/16/2022</span>
          </Clock>
        </Tray>
      </Taskbar>
      <Overlay>
        <OverlayLogo>
          <svg width="14" height="20" viewBox="0 0 14 20" fill="#111">
            <path d="M12 1L2 10l10 9z" />
          </svg>
        </OverlayLogo>
        <OverlayStrip>
          <OverlayDot />
          <OverlayDot />
          <OverlayDot />
        </OverlayStrip>
      </Overlay>
      <Pointer width="14" height="22" viewBox="0 0 14 22">
        <path d="M1 1v16l4-4 3 7 3-1-3-7h5z" fill="#fff" stroke="#111" />
      </Pointer>
    </Page>
  );
}
